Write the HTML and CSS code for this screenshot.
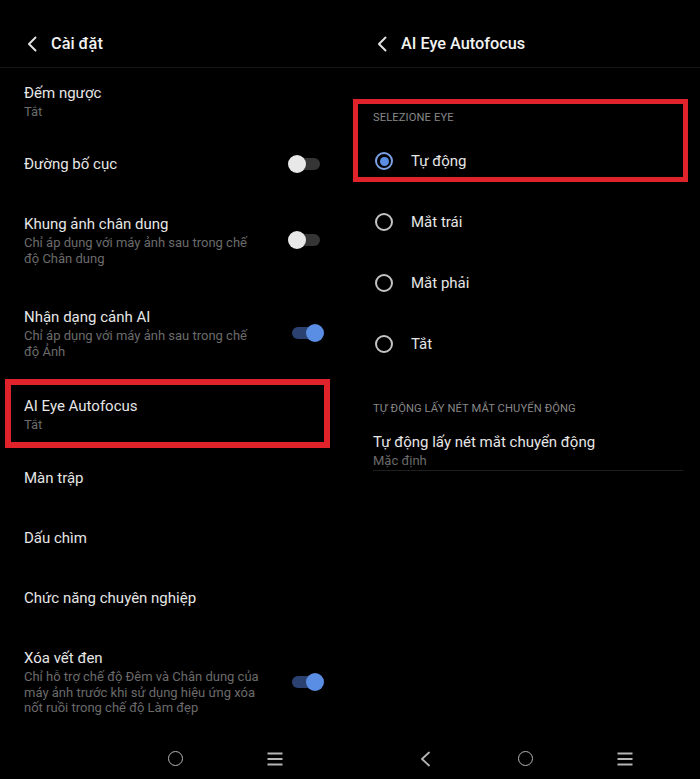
FILE: index.html
```html
<!DOCTYPE html>
<html lang="vi">
<head>
<meta charset="utf-8">
<title>Cài đặt – AI Eye Autofocus</title>
<link rel="stylesheet" href="styles.css">
</head>
<body>
<div class="screens">
  <section class="pane">
    <header class="bar">
      <svg class="back" width="12" height="16" viewBox="0 0 12 16"><path d="M9.5 1.5 L3 8 L9.5 14.5" fill="none" stroke="#e0e0e0" stroke-width="2" stroke-linecap="round" stroke-linejoin="round"/></svg>
      <h1 class="bar-title">Cài đặt</h1>
    </header>
    <div class="list">
      <div class="row first">
        <div class="text"><div class="title">Đếm ngược</div><div class="sub">Tắt</div></div>
      </div>
      <div class="row single">
        <div class="text"><div class="title">Đường bố cục</div></div>
        <span class="toggle"><span class="knob"></span></span>
      </div>
      <div class="row roomy">
        <div class="text"><div class="title">Khung ảnh chân dung</div><div class="sub">Chỉ áp dụng với máy ảnh sau trong chế độ Chân dung</div></div>
        <span class="toggle"><span class="knob"></span></span>
      </div>
      <div class="row">
        <div class="text"><div class="title">Nhận dạng cảnh AI</div><div class="sub">Chỉ áp dụng với máy ảnh sau trong chế độ Ảnh</div></div>
        <span class="toggle on"><span class="knob"></span></span>
      </div>
      <div class="row marked">
        <div class="text"><div class="title">AI Eye Autofocus</div><div class="sub">Tắt</div></div>
      </div>
      <div class="row single">
        <div class="text"><div class="title">Màn trập</div></div>
      </div>
      <div class="row single">
        <div class="text"><div class="title">Dấu chìm</div></div>
      </div>
      <div class="row single">
        <div class="text"><div class="title">Chức năng chuyên nghiệp</div></div>
      </div>
      <div class="row last">
        <div class="text"><div class="title">Xóa vết đen</div><div class="sub">Chỉ hỗ trợ chế độ Đêm và Chân dung của máy ảnh trước khi sử dụng hiệu ứng xóa nốt ruồi trong chế độ Làm đẹp</div></div>
        <span class="toggle on"><span class="knob"></span></span>
      </div>
    </div>
    <nav class="nav">
      <span class="nav-slot hidden"><svg width="12" height="16" viewBox="0 0 12 16"><path d="M10 1.5 L3 8 L10 14.5" fill="none" stroke="#b5b5b5" stroke-width="1.8" stroke-linecap="round" stroke-linejoin="round"/></svg></span>
      <span class="nav-slot"><span class="home"></span></span>
      <span class="nav-slot"><svg width="16" height="14" viewBox="0 0 16 14"><path d="M0.5 1.5 H15.5 M0.5 7 H15.5 M0.5 12.5 H15.5" stroke="#b5b5b5" stroke-width="1.8"/></svg></span>
    </nav>
  </section>

  <section class="pane">
    <header class="bar">
      <svg class="back" width="12" height="16" viewBox="0 0 12 16"><path d="M9.5 1.5 L3 8 L9.5 14.5" fill="none" stroke="#e0e0e0" stroke-width="2" stroke-linecap="round" stroke-linejoin="round"/></svg>
      <h1 class="bar-title">AI Eye Autofocus</h1>
    </header>
    <div class="list options">
      <div class="group marked-group">
        <div class="cat first-cat">SELEZIONE EYE</div>
        <div class="radio-row"><span class="radio checked"></span><span class="radio-label">Tự động</span></div>
      </div>
      <div class="radio-row"><span class="radio"></span><span class="radio-label">Mắt trái</span></div>
      <div class="radio-row"><span class="radio"></span><span class="radio-label">Mắt phải</span></div>
      <div class="radio-row"><span class="radio"></span><span class="radio-label">Tắt</span></div>
      <div class="cat second-cat">TỰ ĐỘNG LẤY NÉT MẮT CHUYỂN ĐỘNG</div>
      <div class="pref">
        <div class="title">Tự động lấy nét mắt chuyển động</div>
        <div class="sub">Mặc định</div>
      </div>
    </div>
    <nav class="nav">
      <span class="nav-slot"><svg width="12" height="16" viewBox="0 0 12 16"><path d="M10 1.5 L3 8 L10 14.5" fill="none" stroke="#b5b5b5" stroke-width="1.8" stroke-linecap="round" stroke-linejoin="round"/></svg></span>
      <span class="nav-slot"><span class="home"></span></span>
      <span class="nav-slot"><svg width="16" height="14" viewBox="0 0 16 14"><path d="M0.5 1.5 H15.5 M0.5 7 H15.5 M0.5 12.5 H15.5" stroke="#b5b5b5" stroke-width="1.8"/></svg></span>
    </nav>
  </section>
</div>
</body>
</html>
```

FILE: styles.css
```css
* { box-sizing: border-box; }
html, body { margin: 0; padding: 0; background: #000; }
body {
  font-family: Roboto, "Noto Sans", "Liberation Sans", sans-serif;
  color: #e6e6e6;
}
.screens {
  display: flex;
  width: 700px;
  height: 779px;
  overflow: hidden;
}
.pane {
  width: 350px;
  height: 779px;
  display: flex;
  flex-direction: column;
  background: #000;
}
.bar {
  height: 68px;
  padding: 21px 0 0 26px;
  display: flex;
  align-items: center;
  border-bottom: 1px solid #171717;
  flex: none;
}
.bar .back { flex: none; margin-top: -1px; }
.bar-title {
  margin: 0 0 0 13px;
  font-size: 16.3px;
  font-weight: 500;
  color: #f2f2f2;
  line-height: 24px;
  position: relative;
  top: 0;
}
.list { flex: 1; }

.row {
  display: flex;
  align-items: center;
  padding: 17px 26px 20px 24px;
}
.row.first { padding-top: 15px; padding-bottom: 14.5px; }
.row.single { padding-top: 20px; padding-bottom: 20px; }
.row.roomy { padding-top: 20px; padding-bottom: 24px; }
.row.marked { padding-bottom: 15.5px; position: relative; }
.row.last { padding-top: 20px; }
.row.marked::after {
  content: "";
  position: absolute;
  left: 5px; right: 20px; top: 0; bottom: 0;
  border: 6px solid #e0222b;
}
.text { width: 238px; flex: none; }
.title {
  font-size: 15px;
  line-height: 20px;
  color: #e6e6e6;
}
.sub {
  margin-top: 1px;
  font-size: 13px;
  line-height: 15.5px;
  color: #6b6b6b;
}
.toggle {
  margin-left: auto;
  position: relative;
  width: 36px;
  height: 18px;
  flex: none;
}
.toggle::before {
  content: "";
  position: absolute;
  left: 2px; right: 4px; top: 3px;
  height: 12px;
  border-radius: 6px;
  background: #353535;
}
.toggle .knob {
  position: absolute;
  left: 0; top: 0;
  width: 18px; height: 18px;
  border-radius: 50%;
  background: #e8e8e8;
}
.toggle.on::before { background: #2b4170; left: 4px; right: 2px; }
.toggle.on .knob { left: auto; right: 0; background: #5a8de4; }

/* right pane */
.options { padding-top: 31px; }
.group { position: relative; }
.marked-group::after {
  content: "";
  position: absolute;
  left: 3px; right: 12px; top: 0; bottom: 9.5px;
  border: 5.5px solid #e0222b;
}
.cat {
  padding-left: 23px;
  font-size: 11.2px;
  line-height: 14px;
  color: #878787;
  letter-spacing: 0.1px;
}
.first-cat { padding-top: 12px; margin-bottom: 5.5px; }
.second-cat { padding-top: 27px; }
.radio-row {
  height: 61px;
  display: flex;
  align-items: center;
  padding-left: 25px;
}
.radio {
  width: 18px; height: 18px;
  border-radius: 50%;
  border: 2px solid #c4c4c4;
  flex: none;
  position: relative;
}
.radio.checked { border-color: #7aa0e6; }
.radio.checked::after {
  content: "";
  position: absolute;
  left: 2.5px; top: 2.5px;
  width: 9px; height: 9px;
  border-radius: 50%;
  background: #5a8de4;
}
.radio-label {
  margin-left: 18px;
  font-size: 15px;
  line-height: 20px;
  color: #e6e6e6;
}
.pref {
  margin: 0 17px 0 23px;
  padding: 16px 0 2px;
  border-bottom: 1px solid #1e1e1e;
}

/* nav */
.nav {
  height: 40px;
  flex: none;
  display: flex;
  justify-content: center;
  align-items: center;
  padding-bottom: 1px;
}
.nav-slot {
  width: 100px;
  display: flex;
  justify-content: center;
  align-items: center;
}
.nav-slot.hidden { visibility: hidden; }
.home {
  width: 15px; height: 15px;
  border-radius: 50%;
  border: 1.8px solid #b5b5b5;
}
```
